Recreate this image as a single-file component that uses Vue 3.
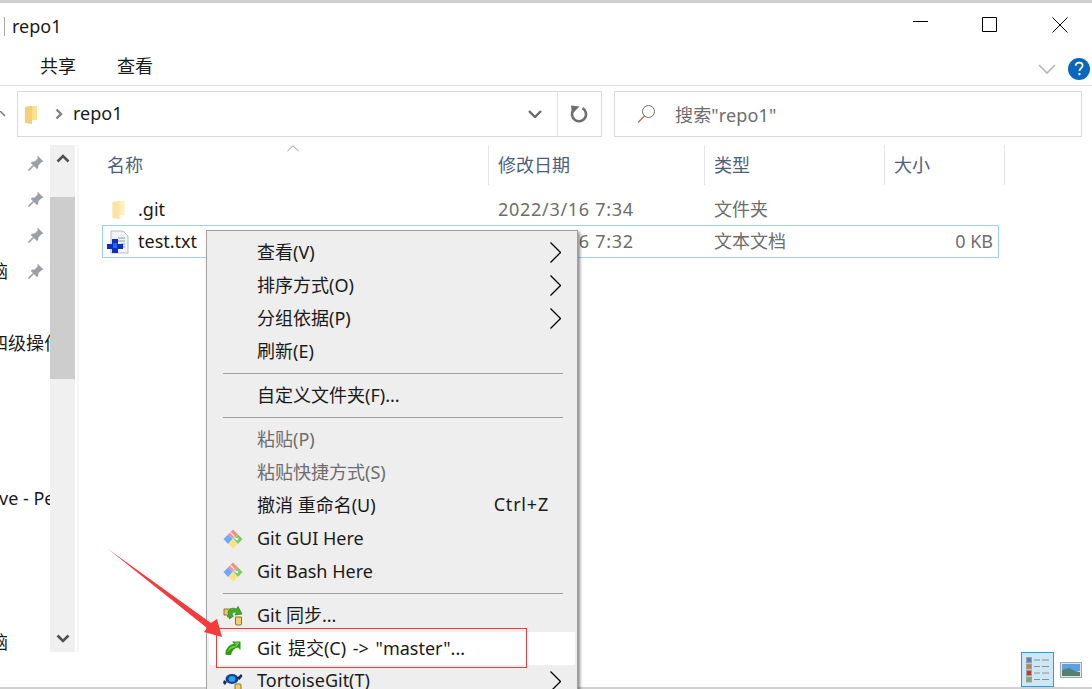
<template>
  <div class="window">
    <div class="top-edge"></div>

    <div class="titlebar">
      <span class="title-sep"></span>
      <span class="title">repo1</span>
      <div class="win-btns">
        <svg width="16" height="16" viewBox="0 0 16 16"><path d="M1 4.500h15" stroke="#000" fill="none" /></svg>
        <svg width="16" height="16" viewBox="0 0 16 16"><path d="M0.500 0.500h14v14h-14z" stroke="#000" fill="none" /></svg>
        <svg width="16" height="16" viewBox="0 0 16 16"><path d="M0.500 0.500l15 15M15.500 0.500l-15 15" stroke="#000" fill="none" /></svg>
      </div>
    </div>

    <div class="ribbon">
      <span class="tab first">共享</span>
      <span class="tab">查看</span>
      <svg class="collapse" width="18" height="10" viewBox="0 0 18 10"><path d="M1 1l8 8 8-8" stroke="#b4b4b4" stroke-width="1.600" fill="none" /></svg>
      <svg class="help" width="22" height="22" viewBox="0 0 22 22">
        <circle cx="11" cy="11" r="11" fill="#0b66c0" />
        <path d="M7.600 7.600c.3-2 1.800-3 3.600-3 2 0 3.400 1.200 3.400 2.900 0 2.600-3.100 2.600-3.100 5.400" stroke="#fff" stroke-width="1.800" fill="none" />
        <rect x="10.400" y="15" width="2" height="2.200" fill="#fff" />
      </svg>
    </div>

    <div class="addr-row">
      <svg class="up" width="6" height="6" viewBox="0 0 6 6"><path d="M0 0l5 5" stroke="#777" stroke-width="1.400" fill="none" /></svg>
      <div class="addr">
        <svg width="15" height="22" viewBox="0 0 15 22">
          <path d="M1 4l7-1v0h5v14H1z" fill="#fbe08f" />
          <path d="M1 4l7-1v18l-7-1z" fill="#f5cf74" />
        </svg>
        <svg class="crumb" width="8" height="12" viewBox="0 0 8 12"><path d="M1.500 1.500L6 6l-4.500 4.500" stroke="#808080" stroke-width="2.400" fill="none" /></svg>
        <span class="addr-text">repo1</span>
        <svg class="drop" width="14" height="8" viewBox="0 0 14 8"><path d="M1 1l6 6 6-6" stroke="#6a6a6a" stroke-width="2.400" fill="none" /></svg>
        <span class="addr-div"></span>
        <svg class="refresh" width="18" height="18" viewBox="0 0 18 18">
          <path d="M12.500 3.200A7 7 0 1 1 3.500 5" stroke="#6f6f6f" stroke-width="2.600" fill="none" />
          <path d="M1 0.500l8.500 1-7.500 7.500z" fill="#6f6f6f" />
        </svg>
      </div>
      <div class="search">
        <svg width="20" height="20" viewBox="0 0 20 20">
          <circle cx="12.500" cy="7.500" r="6" stroke="#6d6d6d" fill="none" />
          <path d="M8.500 12L2 18.500" stroke="#b0745a" stroke-width="1.500" fill="none" />
        </svg>
        <span>搜索"repo1"</span>
      </div>
    </div>

    <div class="main">
      <div class="nav">
        <div v-for="row in navRows" :key="row.id" class="nav-row" :class="row.cls">
          <span v-if="row.text" class="nav-text" :class="row.textCls">{{ row.text }}</span>
          <svg v-if="row.pin" class="pin" width="16" height="16" viewBox="0 0 16 16">
            <path d="M9.500 0.500l6 6-2 .8-3 3-.4 3-1.200 .7-6-6 .7-1.200 3-.4 3-3z" fill="#9aa0a6" />
            <path d="M5.500 10.500L0.500 15.500" stroke="#9aa0a6" stroke-width="1.600" />
          </svg>
        </div>
      </div>
      <div class="scroll">
        <svg width="14" height="9" viewBox="0 0 14 9"><path d="M1.500 7.500L7 2l5.500 5.500" stroke="#505050" stroke-width="2.600" fill="none" /></svg>
        <div class="thumb"></div>
        <svg class="scroll-down" width="14" height="9" viewBox="0 0 14 9"><path d="M1.500 1.500L7 7l5.500-5.500" stroke="#505050" stroke-width="2.600" fill="none" /></svg>
      </div>
      <div class="pane-edge"></div>

      <div class="list">
        <div class="head">
          <span class="col name">名称</span>
          <svg class="sort" width="12" height="7" viewBox="0 0 12 7"><path d="M0.500 6L6 0.800 11.500 6" stroke="#9a9a9a" fill="none" /></svg>
          <span class="col date">修改日期</span>
          <span class="col type">类型</span>
          <span class="col size">大小</span>
        </div>
        <div class="file first-file">
          <div class="f-name">
            <svg width="16" height="22" viewBox="0 0 15 22">
              <path d="M1 4l7-1v0h5v14H1z" fill="#fdeebb" />
              <path d="M1 4l7-1v18l-7-1z" fill="#fbe3a1" />
            </svg>
            <span>.git</span>
          </div>
          <span class="f-date">2022/3/16 7:34</span>
          <span class="f-type">文件夹</span>
        </div>
        <div class="file selected">
          <div class="f-name">
            <svg width="22" height="24" viewBox="0 0 22 24">
              <path d="M4 1h12l5 5v17H4z" fill="#f1f3f6" stroke="#b6bcc6" />
              <path d="M11 8h7M11 11h7M14 14h4M14 17h4" stroke="#8c96a6" />
              <path d="M5 9h6v5h5v5h-5v4H5v-4H0v-5h5z" fill="#0d2fc0" />
              <path d="M6 13h4v5H6z" fill="#1f66f0" />
            </svg>
            <span class="f-label">test.txt</span>
          </div>
          <span class="f-date">2022/3/16 7:32</span>
          <span class="f-type">文本文档</span>
          <span class="f-size">0 KB</span>
        </div>
      </div>
    </div>

    <div class="status">
      <div class="view-btn active">
        <svg width="24" height="26" viewBox="0 0 24 26">
          <g v-for="(c, i) in detailColors" :key="c">
            <rect :x="0.500" :y="i * 6.500 + 0.500" width="5" height="5" :fill="c" stroke="#a0a0a0" />
            <path :d="`M8 ${i * 6.500 + 3}h6M16 ${i * 6.500 + 3}h7`" stroke="#8d8d8d" />
          </g>
        </svg>
      </div>
      <svg class="view-thumb" width="22" height="16" viewBox="0 0 22 16">
        <rect x="0.500" y="0.500" width="21" height="15" fill="#dbe8f4" stroke="#a5a5a5" />
        <rect x="2" y="2" width="18" height="7" fill="#5aa0e6" />
        <path d="M2 8l7-2 6 3 5 1v4H2z" fill="#55806e" />
      </svg>
    </div>

    <div class="menu">
      <template v-for="item in menu" :key="item.id">
        <div v-if="item.sep" class="sep"></div>
        <div v-else class="item" :class="{ off: item.off, hot: item.hot, latin: item.icon === 'git' }">
          <span class="m-icon">
            <svg v-if="item.icon === 'git'" width="20" height="20" viewBox="0 0 20 20">
              <path d="M10 0.500L15 5.500 10 10 5 5.500z" fill="#f58c8c" />
              <path d="M5 5.500L9.500 10 5 15 0.500 10z" fill="#6ea8f8" />
              <path d="M15 5.500L19.500 10 15 15 10.500 10z" fill="#7ccc60" />
              <path d="M10 10.500L14.500 15 10 19.500 5.500 15z" fill="#fde27a" />
              <path d="M7.500 3.500L11 7" stroke="#f4f4f4" stroke-width="1.200" />
              <path d="M10.500 7.500L13 10" stroke="#e4e4e4" stroke-width="1.200" />
              <circle cx="14" cy="10" r="1.300" fill="#f4f4f4" />
            </svg>
            <svg v-else-if="item.icon === 'sync'" class="sync" width="20" height="20" viewBox="0 0 20 20">
              <path d="M1 3h7v8H4.500v-2H1z" fill="#eac866" stroke="#8a7330" />
              <path d="M12.500 11h6v7a1 1 0 0 1-1 1h-4a1 1 0 0 1-1-1z" fill="#f0cf6e" stroke="#8a7330" />
              <path d="M5 6c1-3 5-5 8.500-3L15 0.500 19 8l-7 1 1.500-2.500c-2.500-1-4 0-4.500 2.500l1.500 1-4 3z" fill="#3fb01f" stroke="#1c6b10" stroke-width=".6" />
            </svg>
            <svg v-else-if="item.icon === 'commit'" class="commit" width="16" height="14" viewBox="0 0 16 14">
              <path d="M0.500 13.500C0 8 4 3.500 9 3L7 0.500h8.500V9L13 6.500C9.500 7 7 9.500 6 14H1.500z" fill="#2f9a14" />
              <path d="M2.500 11.500C3 7.500 6 4.800 11.500 4.500L9.500 1.500H14.500L11 6C7 6.500 4.500 8.500 2.500 11.500z" fill="#74d83a" />
            </svg>
            <svg v-else-if="item.icon === 'tortoise'" class="tortoise" width="20" height="20" viewBox="0 0 20 20">
              <ellipse cx="9" cy="7" rx="6.500" ry="5" fill="#123f8e" />
              <ellipse cx="9" cy="7" rx="3.500" ry="3" fill="#2aa0e8" />
              <path d="M14 6l4-4 1.500 2-3 4zM1 8l3 2-2 3-2-2z" fill="#0e2c63" />
              <rect x="12" y="12" width="6" height="7" rx="1" fill="#f0cf6e" stroke="#8a7330" />
            </svg>
          </span>
          <span class="m-label">{{ item.label }}</span>
          <span v-if="item.key" class="m-key">{{ item.key }}</span>
          <svg v-if="item.sub" class="m-sub" width="11" height="21" viewBox="0 0 11 21"><path d="M0.500 0.500l10 10-10 10" stroke="#000" stroke-width="1.300" fill="none" /></svg>
        </div>
      </template>
    </div>

    <div class="red-box"></div>
    <svg class="arrow" width="130" height="100" viewBox="0 0 130 100">
      <path d="M8 9L111 83l6-4 5 18-18-5 3-4z" fill="#f43b3b" />
    </svg>
  </div>
</template>

<script setup>
const navRows = [
  { id: 1, pin: true },
  { id: 2, pin: true },
  { id: 3, pin: true },
  { id: 4, pin: true, text: '脑', textCls: 'cut' },
  { id: 5 },
  { id: 6, text: '四级操作', textCls: 'cut' },
  { id: 7, text: 've - Personal', textCls: 'cut-latin', cls: 'gap-a' },
  { id: 8, text: '脑', textCls: 'cut', cls: 'gap-b' }
]

const detailColors = ['#4f87b8', '#b9824f', '#c8352c', '#7fa86a']

const menu = [
  { id: 1, label: '查看(V)', sub: true },
  { id: 2, label: '排序方式(O)', sub: true },
  { id: 3, label: '分组依据(P)', sub: true },
  { id: 4, label: '刷新(E)' },
  { id: 5, sep: true },
  { id: 6, label: '自定义文件夹(F)...' },
  { id: 7, sep: true },
  { id: 8, label: '粘贴(P)', off: true },
  { id: 9, label: '粘贴快捷方式(S)', off: true },
  { id: 10, label: '撤消 重命名(U)', key: 'Ctrl+Z' },
  { id: 11, label: 'Git GUI Here', icon: 'git' },
  { id: 12, label: 'Git Bash Here', icon: 'git' },
  { id: 13, sep: true },
  { id: 14, label: 'Git 同步...', icon: 'sync' },
  { id: 15, label: 'Git 提交(C) -> "master"...', icon: 'commit', hot: true },
  { id: 16, label: 'TortoiseGit(T)', icon: 'tortoise', sub: true }
]
</script>

<style>
html, body { margin: 0; background: #fff; }
</style>

<style scoped>
.window {
  position: relative;
  width: 1092px;
  height: 689px;
  overflow: hidden;
  display: flex;
  flex-direction: column;
  background: #fff;
  color: #1a1a1a;
  font-family: "Noto Sans", "Noto Sans CJK SC", sans-serif;
  font-size: 18px;
}

.top-edge { height: 3px; background: #cfcfcf; flex-shrink: 0; }

.titlebar {
  height: 49px;
  flex-shrink: 0;
  display: flex;
  align-items: center;
  padding-left: 4px;
}
.title-sep { width: 1px; height: 19px; background: #a8a8a8; margin-right: 7px; margin-bottom: 3px; }
.title { line-height: 1; padding-bottom: 4px; }
.win-btns {
  margin-left: auto;
  display: flex;
  gap: 54px;
  padding-right: 24px;
  padding-bottom: 5px;
}

.ribbon {
  height: 33px;
  flex-shrink: 0;
  display: flex;
  align-items: center;
  border-bottom: 1px solid #dcdcdc;
  padding-left: 40px;
  padding-right: 2px;
}
.tab { margin-right: 41px; padding-bottom: 8px; }
.collapse { margin-left: auto; margin-right: 12px; }

.addr-row {
  height: 59px;
  flex-shrink: 0;
  display: flex;
  align-items: flex-start;
  padding-top: 5px;
  box-sizing: border-box;
}
.up { margin-top: 20px; margin-right: 11px; }
.addr, .search {
  height: 46px;
  box-sizing: border-box;
  border: 1px solid #d9d9d9;
  display: flex;
  align-items: center;
}
.addr { width: 585px; padding-left: 6px; }
.crumb { margin-left: 16px; }
.addr-text { margin-left: 10px; padding-bottom: 2px; }
.drop { margin-left: auto; margin-right: 15px; }
.addr-div { width: 1px; height: 44px; background: #e3e3e3; }
.refresh { margin-left: 12px; margin-right: 13px; }
.search {
  width: 468px;
  margin-left: 12px;
  padding-left: 21px;
  gap: 19px;
  color: #6d6d6d;
}
.search span { padding-bottom: 1px; letter-spacing: 0.15px; }

.main { height: 507px; flex-shrink: 0; display: flex; }

.nav { width: 50px; flex-shrink: 0; overflow: hidden; }
.nav-row {
  position: relative;
  height: 36px;
  display: flex;
  align-items: center;
  white-space: nowrap;
}
.gap-a { margin-top: 119px; }
.gap-b { margin-top: 108px; }
.nav-text { color: #1a1a1a; padding-bottom: 2px; }
.cut { margin-left: -10px; }
.cut-latin { margin-left: -1px; padding-bottom: 0; }
.pin { position: absolute; left: 28px; top: 10px; }

.scroll {
  width: 25px;
  flex-shrink: 0;
  background: #f0f0f0;
  display: flex;
  flex-direction: column;
  align-items: center;
  padding-top: 9px;
  box-sizing: border-box;
}
.thumb { align-self: stretch; height: 182px; margin-top: 34px; background: #cdcdcd; }
.scroll-down { margin-top: auto; margin-bottom: 9px; }
.pane-edge { width: 2px; margin-left: 2px; background: #f5f5f5; flex-shrink: 0; }

.list { flex: 1; position: relative; padding-left: 23px; }
.head { height: 40px; display: flex; color: #4c607a; position: relative; }
.col {
  height: 40px;
  line-height: 40px;
  box-sizing: border-box;
  border-right: 1px solid #e5e5e5;
  padding-left: 9px;
}
.name { width: 387px; padding-left: 5px; }
.date { width: 216px; }
.type { width: 180px; }
.size { width: 120px; }
.sort { position: absolute; left: 185px; top: 0; }

.file {
  height: 32px;
  width: 897px;
  box-sizing: border-box;
  display: flex;
  align-items: center;
  border: 1px solid transparent;
  color: #6d6d6d;
}
.first-file { margin-top: 8px; }
.selected { border-color: #99d1ff; height: 33px; }
.f-name { width: 395px; flex-shrink: 0; display: flex; align-items: center; gap: 11px; padding-left: 8px; box-sizing: border-box; color: #1a1a1a; }
.selected .f-name { padding-left: 4px; gap: 9px; }
.f-label { padding-bottom: 2px; }
.f-date { width: 216px; flex-shrink: 0; letter-spacing: 0.7px; padding-bottom: 1px; }
.f-type { flex-shrink: 0; padding-bottom: 3px; }
.f-size { margin-left: auto; margin-right: 5px; padding-bottom: 2px; }

.status {
  height: 35px;
  flex-shrink: 0;
  border-bottom: 2px solid #d0d0d0;
  display: flex;
  justify-content: flex-end;
  align-items: center;
  padding-right: 10px;
  gap: 6px;
}
.view-btn {
  width: 33px;
  height: 35px;
  box-sizing: border-box;
  background: #cce8f7;
  border: 1px solid #26a0da;
  display: flex;
  align-items: center;
  justify-content: center;
}

.menu {
  position: absolute;
  left: 206px;
  top: 230px;
  width: 372px;
  height: 480px;
  box-sizing: border-box;
  padding: 5px 2px;
  background: #eeeeee;
  border: 1px solid #a0a0a0;
  box-shadow: 2px 2px 3px rgba(0, 0, 0, 0.45);
  color: #1a1a1a;
}
.item {
  height: 33px;
  display: flex;
  align-items: center;
  padding-right: 14px;
}
.off { color: #6d6d6d; }
.hot { background: #fff; word-spacing: 2px; }
.m-icon {
  width: 48px;
  flex-shrink: 0;
  display: flex;
  align-items: center;
  justify-content: center;
}
.commit { margin-bottom: 1px; }
.m-label { white-space: nowrap; padding-bottom: 4px; }
.latin .m-label { padding-bottom: 2px; }
.m-key { margin-left: auto; margin-right: 12px; padding-bottom: 4px; letter-spacing: 0.8px; }
.m-sub { margin-left: auto; }
.sep { height: 1px; margin: 5px 12px 5px 14px; background: #a0a0a0; }

.red-box {
  position: absolute;
  left: 216px;
  top: 628px;
  width: 311px;
  height: 40px;
  box-sizing: border-box;
  border: 1px solid #f53a3a;
}
.arrow { position: absolute; left: 100px; top: 540px; }
</style>
